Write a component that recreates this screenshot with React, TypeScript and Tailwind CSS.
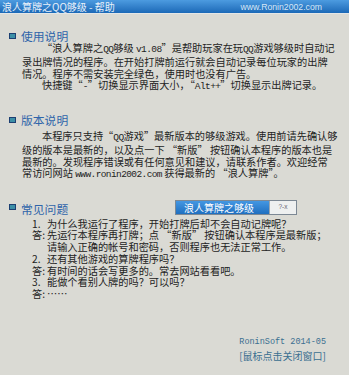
import React from "react";

const M = ({ children }: { children: React.ReactNode }) => (
  <span className="font-['Liberation_Mono',monospace] text-[9.5px] tracking-[-0.6px]">{children}</span>
);

const Icon = () => (
  <div className="w-[7px] h-[6px] border border-[#1c3f72] bg-[#3c8fa6] shrink-0" />
);

const Heading = ({ children }: { children: React.ReactNode }) => (
  <span className="text-[11.8px] leading-[13px] text-[#2f65aa] whitespace-nowrap">{children}</span>
);

const Line = ({ children, indent }: { children: React.ReactNode; indent?: boolean }) => (
  <div className={indent ? "pl-[20px] whitespace-nowrap" : "whitespace-nowrap"}>{children}</div>
);

const Row = ({ label, children }: { label?: string; children: React.ReactNode }) => (
  <div className="flex whitespace-nowrap">
    <span className="w-[15px] shrink-0">{label}</span>
    <span>{children}</span>
  </div>
);

export default function App() {
  return (
    <div
      lang="zh-CN"
      className="w-[349px] h-[375px] overflow-hidden bg-[#dadad4] font-['Noto_Sans_CJK_SC',sans-serif] flex flex-col"
    >
      <div className="h-[14px] shrink-0 bg-linear-to-b from-[#4c9be0] to-[#1b69b7] flex items-center justify-between pl-[2px] pr-[27px] border-b border-[#e4e6e6]">
        <span className="text-[10px] leading-[14px] text-[#e8f1fa] whitespace-nowrap">
          浪人算牌之QQ够级 - 帮助
        </span>
        <span className="font-['Liberation_Sans',sans-serif] text-[8.7px] leading-[14px] text-[#d6e6f6] whitespace-nowrap">
          www.Ronin2002.com
        </span>
      </div>

      <div className="mt-[15px] pl-[9px] flex items-center gap-[5px]">
        <Icon />
        <Heading>使用说明</Heading>
      </div>
      <div className="pl-[22px] text-[10.2px] leading-[11.75px] text-[#232323]">
        <Line indent>
          “浪人算牌之<M>QQ</M>够级 <M>v1.08</M>”是帮助玩家在玩<M>QQ</M>游戏够级时自动记
        </Line>
        <Line>录出牌情况的程序。在开始打牌前运行就会自动记录每位玩家的出牌</Line>
        <Line>情况。程序不需安装完全绿色，使用时也没有广告。</Line>
        <Line indent>
          快捷键“<M>-</M>”切换显示界面大小，“<M>Alt++</M>”切换显示出牌记录。
        </Line>
      </div>

      <div className="mt-[20px] pl-[9px] flex items-center gap-[5px]">
        <Icon />
        <Heading>版本说明</Heading>
      </div>
      <div className="mt-[4px] pl-[22px] text-[10.2px] leading-[11.75px] text-[#232323]">
        <Line indent>
          本程序只支持“<M>QQ</M>游戏”最新版本的够级游戏。使用前请先确认够
        </Line>
        <Line>级的版本是最新的，以及点一下 “新版” 按钮确认本程序的版本也是</Line>
        <Line>最新的。发现程序错误或有任何意见和建议，请联系作者。欢迎经常</Line>
        <Line>
          常访问网站 <M>www.ronin2002.com</M> 获得最新的 “浪人算牌”。
        </Line>
      </div>

      <div className="mt-[19.5px] pl-[9px] h-[13px] flex items-center gap-[5px]">
        <Icon />
        <div className="w-[149px] shrink-0">
          <Heading>常见问题</Heading>
        </div>
        <div className="h-[15px] w-[122px] shrink-0 flex border border-[#7c8894]">
          <div className="w-[94px] bg-linear-to-b from-[#4497e2] to-[#1e6fc0] text-white text-[10px] leading-[13px] pl-[8px] whitespace-nowrap border-r border-[#9aa6b0]">
            浪人算牌之够级
          </div>
          <div className="flex-1 bg-[#eef0f0] flex items-center justify-center">
            <span className="font-['Liberation_Sans',sans-serif] text-[6.5px] text-[#667] leading-none">?-x</span>
          </div>
        </div>
      </div>
      <div className="mt-[4px] pl-[32px] text-[10.2px] leading-[11.75px] text-[#232323]">
        <Row label="1.">为什么我运行了程序，开始打牌后却不会自动记牌呢？</Row>
        <Row label="答:">先运行本程序再打牌；点 “新版” 按钮确认本程序是最新版；</Row>
        <Row>请输入正确的帐号和密码，否则程序也无法正常工作。</Row>
        <Row label="2.">还有其他游戏的算牌程序吗？</Row>
        <Row label="答:">有时间的话会写更多的。常去网站看看吧。</Row>
        <Row label="3.">能做个看别人牌的吗？可以吗？</Row>
        <Row label="答:">……</Row>
      </div>

      <div className="mt-[36px] pr-[23px] flex flex-col items-end text-[#3b6f90]">
        <span className="font-['Liberation_Mono',monospace] text-[8.5px] leading-[13px] whitespace-nowrap">
          RoninSoft 2014-05
        </span>
        <span className="text-[10px] leading-[13px] whitespace-nowrap">[鼠标点击关闭窗口]</span>
      </div>
    </div>
  );
}
